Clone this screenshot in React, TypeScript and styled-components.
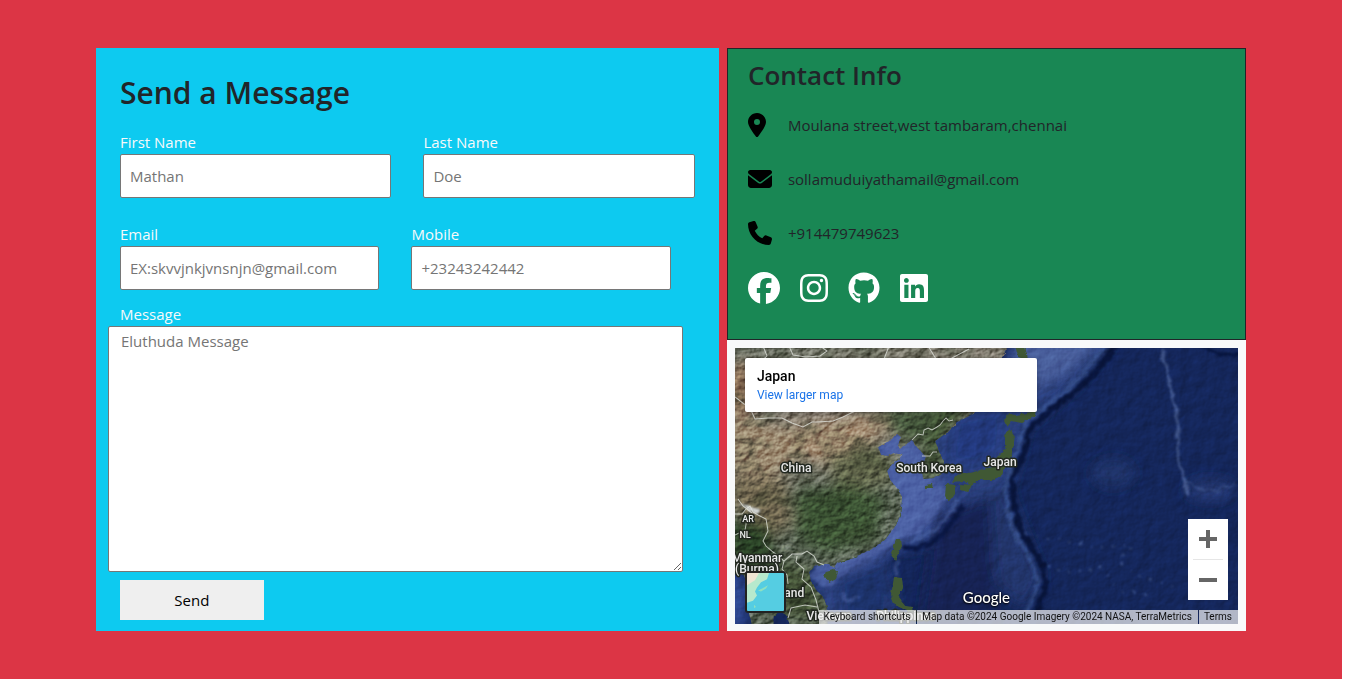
import React from "react";
import styled, { createGlobalStyle } from "styled-components";
import {
  FaEnvelope,
  FaFacebook,
  FaGithub,
  FaInstagram,
  FaLinkedin,
  FaLocationDot,
  FaPhone,
} from "react-icons/fa6";

const GlobalStyle = createGlobalStyle`
  *, *::before, *::after { box-sizing: border-box; }
  body {
    margin: 0;
    background: #fff;
    color: #212529;
    font-family: "Segoe UI", "Open Sans", "Noto Sans", sans-serif;
    font-size: 15px;
    line-height: 24px;
  }
`;

const Section = styled.main`
  display: grid;
  grid-template-columns: 6fr 5fr;
  gap: 8px;
  min-height: 100vh;
  margin-right: 24px;
  padding: 48px 96px;
  align-items: start;
  background: #dc3545;
`;

const MessageForm = styled.form`
  padding: 25px 12px 11px;
  background: #0dcaf0;
`;

const Title = styled.h1`
  margin: 0 12px 17px;
  font-size: 30px;
  font-weight: 600;
  line-height: 40px;
`;

const FieldRow = styled.div<{ $inset?: boolean }>`
  display: grid;
  grid-template-columns: 1fr 1fr;
  gap: 32px;
  margin: 0 ${(p) => (p.$inset ? "36px 12px 12px" : "12px 24px 12px")};
`;

const Field = styled.div`
  min-width: 0;
`;

const Label = styled.label<{ $indent?: boolean }>`
  display: block;
  margin-left: ${(p) => (p.$indent ? "12px" : "0")};
  color: #f8f9fa;
`;

const Input = styled.input`
  display: block;
  width: 100%;
  height: 44px;
  padding: 0 9px;
  border: 1px solid #767676;
  border-radius: 2px;
  background: #fff;
  font: inherit;
  &::placeholder { color: #757575; opacity: 1; }
`;

const TextArea = styled.textarea`
  display: block;
  width: 96%;
  height: 246px;
  padding: 2px 12px;
  border: 1px solid #767676;
  border-radius: 2px;
  background: #fff;
  font: inherit;
  &::placeholder { color: #757575; opacity: 1; }
`;

const SendButton = styled.button`
  display: block;
  width: 24%;
  height: 40px;
  margin: 8px 12px 0;
  border: 0;
  background: #efefef;
  color: #000;
  font: inherit;
`;

const Side = styled.div`
  display: flex;
  flex-direction: column;
  align-self: stretch;
  min-width: 0;
`;

const ContactCard = styled.section`
  padding: 10px 20px 35px;
  border: 1px solid #212529;
  background: #198754;
`;

const ContactTitle = styled.h2`
  margin: 0 0 22px;
  font-size: 26px;
  font-weight: 600;
  line-height: 32px;
`;

const ContactList = styled.address`
  display: grid;
  gap: 30px;
  font-style: normal;
`;

const ContactItem = styled.div<{ $icon: number }>`
  display: grid;
  grid-template-columns: 24px 1fr;
  gap: 16px;
  align-items: center;
  height: 24px;
  svg { width: ${(p) => p.$icon}px; height: 24px; color: #000; }
`;

const Socials = styled.nav`
  display: flex;
  gap: 20px;
  margin-top: 27px;
`;

const SocialLink = styled.a<{ $icon: number }>`
  display: block;
  height: 32px;
  color: #fff;
  svg { display: block; width: ${(p) => p.$icon}px; height: 32px; }
`;

const MapFrame = styled.section`
  display: flex;
  flex: 1;
  padding: 8px 8px 7px;
  background: #f8f9fa;
`;

const MapView = styled.div`
  position: relative;
  flex: 1;
  min-width: 0;
  min-height: 276px;
  overflow: hidden;
  background: #14275d;
  font-family: Roboto, sans-serif;
`;

const MapDrawing = styled.svg`
  position: absolute;
  inset: 0;
  width: 100%;
  height: 100%;
`;

const PlaceCard = styled.div`
  position: absolute;
  top: 10px;
  left: 10px;
  width: 292px;
  height: 54px;
  padding: 9px 12px;
  border-radius: 2px;
  background: #fff;
  box-shadow: 0 1px 4px rgba(0, 0, 0, 0.3);
`;

const PlaceName = styled.div`
  color: #000;
  font-size: 14px;
  font-weight: 500;
  line-height: 18px;
`;

const PlaceLink = styled.a`
  display: block;
  color: #1a73e8;
  font-size: 12px;
  line-height: 20px;
  text-decoration: none;
`;

const ZoomControls = styled.div`
  position: absolute;
  right: 10px;
  bottom: 24px;
  width: 40px;
  height: 81px;
  padding: 0 5px;
  background: #fff;
`;

const ZoomButton = styled.button`
  display: grid;
  place-items: center;
  width: 30px;
  height: 40px;
  padding: 0;
  border: 0;
  background: none;
  & + & { height: 41px; border-top: 1px solid #e6e6e6; }
`;

const LayerButton = styled.button`
  position: absolute;
  bottom: 11px;
  left: 10px;
  width: 41px;
  height: 42px;
  padding: 0;
  overflow: hidden;
  border: 2px solid #222;
  border-radius: 3px;
  background: #55cde2;
  svg { display: block; width: 100%; height: 100%; }
`;

const Brand = styled.div`
  position: absolute;
  bottom: 17px;
  left: 50%;
  transform: translateX(-50%);
  color: #fff;
  font-family: Lato, sans-serif;
  font-size: 15px;
  font-weight: 500;
  line-height: 20px;
  text-shadow: 0 0 2px #000, 0 1px 2px #000;
`;

const Attribution = styled.div`
  position: absolute;
  right: 0;
  bottom: 0;
  display: flex;
  gap: 1px;
  height: 14px;
  font-size: 10px;
  line-height: 14px;
  white-space: nowrap;
`;

const Credit = styled.span`
  padding: 0 6px 0 5px;
  background: rgba(245, 245, 245, 0.7);
  color: #111;
`;

const CreditLink = styled(Credit).attrs({ as: "a", href: "#" })`
  text-decoration: none;
`;

const MAINLAND =
  "M-5 -5H275L270 4L262 18L254 38L248 56L238 66L222 74L213 84L200 93L204 104L209 114L207 125L198 130L188 131L187 118L191 109L182 99L177 92L168 98L165 101L163 97L166 89L161 85L154 93L143 99L146 107L153 108L159 105L168 107L162 112L157 116L152 123L155 132L162 140L167 149L166 159L165 168L159 180L152 189L143 197L135 202L126 206L119 210L102 215L99 220L94 216L88 216L79 218L74 224L76 234L82 243L88 249L92 259L93 270L90 281H56L52 268L44 262L39 268L38 281H18L13 261L14 240L8 225L-5 218Z";

const ISLANDS = [
  "M91 223L98 221L103 224L101 231L94 235L89 229Z",
  "M161 192L166 191L167 198L163 206L160 212L156 205Z",
  "M159 229L167 230L168 240L164 249L171 258L177 259L178 265L168 261L160 257L156 247Z",
  "M273 66L281 67L301 63L299 69L286 75L277 73L272 79L269 73Z",
  "M280 -3H289L292 12L283 9Z",
  "M274 80L280 88L278 100L275 112L270 120L267 128L256 132L242 132L236 139L229 133L216 134L221 127L239 124L247 121L258 119L262 109L270 101L270 89Z",
  "M211 136L220 137L220 145L214 153L210 148Z",
  "M225 137L237 138L232 144L225 142Z",
  "M190 137L196 136L197 140L190 141Z",
];

const BORDERS = [
  "M0 49L9 56L14 58L20 71L33 70L47 70L57 75L68 79L77 74L82 74L98 73L108 69L118 64L139 52L175 45L205 38L220 28L223 18L217 10L234 1",
  "M28 -2L32 8L23 17M54 -2L58 7L71 9L85 8L92 3L85 -2M154 -2L149 11M193 -2L201 11",
  "M177 92L183 86L188 87L189 82L193 80L197 82L202 79L205 77L208 73L211 70L214 73L218 72",
  "M187 108L195 108L198 104L202 104",
  "M0 166L7 166L11 161L15 158L18 164L23 167L31 171L33 183L28 193L31 198L38 204L43 208L49 213L47 221L52 227L53 236",
  "M49 213L57 206L67 206L72 203L79 208L82 214L89 217M62 208L61 214L69 221L67 231L76 239L81 252L84 264",
  "M53 270L56 260L70 257L82 259M0 187L10 182L12 171M3 151L8 158L17 165",
];

const LABELS = [
  { x: 61, y: 124, text: "China" },
  { x: 194, y: 124, text: "South Korea" },
  { x: 265, y: 118, text: "Japan" },
  { x: 22, y: 214, text: "Myanmar" },
  { x: 22, y: 225, text: "(Burma)" },
  { x: 46, y: 249, text: "Thailand" },
  { x: 94, y: 272, text: "Vietnam" },
  { x: 171, y: 272, text: "Philippines" },
];

function SatelliteMap() {
  return (
    <MapDrawing viewBox="0 0 503 276" preserveAspectRatio="xMidYMid slice" role="img" aria-label="Satellite map of East Asia">
      <defs>
        <linearGradient id="terrain" x1="0" y1="0" x2="0.25" y2="1">
          <stop offset="0" stopColor="#4b5840" />
          <stop offset="0.14" stopColor="#69694f" />
          <stop offset="0.3" stopColor="#94826b" />
          <stop offset="0.44" stopColor="#7b725a" />
          <stop offset="0.58" stopColor="#4b5c41" />
          <stop offset="1" stopColor="#3a4f34" />
        </linearGradient>
        <filter id="haze" x="-20%" y="-20%" width="140%" height="140%">
          <feGaussianBlur stdDeviation="7" />
        </filter>
        <filter id="ridge" x="-20%" y="-20%" width="140%" height="140%" colorInterpolationFilters="sRGB">
          <feTurbulence type="fractalNoise" baseFrequency="0.12" numOctaves="3" seed="4" />
          <feDisplacementMap in="SourceGraphic" scale="7" xChannelSelector="R" yChannelSelector="G" />
          <feGaussianBlur stdDeviation="1" />
        </filter>
        <filter id="coast" colorInterpolationFilters="sRGB">
          <feTurbulence type="fractalNoise" baseFrequency="0.2" numOctaves="2" seed="9" />
          <feDisplacementMap in="SourceGraphic" scale="4" xChannelSelector="R" yChannelSelector="G" />
        </filter>
        <filter id="relief" x="0" y="0" width="100%" height="100%" colorInterpolationFilters="sRGB">
          <feTurbulence type="fractalNoise" baseFrequency="0.12 0.15" numOctaves="5" seed="12" />
          <feDiffuseLighting surfaceScale="2" lightingColor="#fff">
            <feDistantLight azimuth="225" elevation="30" />
          </feDiffuseLighting>
        </filter>
        <filter id="patches" x="0" y="0" width="100%" height="100%" colorInterpolationFilters="sRGB">
          <feTurbulence type="fractalNoise" baseFrequency="0.035 0.05" numOctaves="4" seed="31" />
          <feColorMatrix values="0 0 0 0 0.15  0 0 0 0 0.2  0 0 0 0 0.12  3.4 0 0 0 -1.5" />
        </filter>
        <filter id="seabed" x="0" y="0" width="100%" height="100%" colorInterpolationFilters="sRGB">
          <feTurbulence type="fractalNoise" baseFrequency="0.08" numOctaves="5" seed="21" />
          <feDiffuseLighting surfaceScale="1" lightingColor="#fff">
            <feDistantLight azimuth="225" elevation="30" />
          </feDiffuseLighting>
        </filter>
        <clipPath id="land">
          <path d={MAINLAND} />
        </clipPath>
      </defs>

      <rect width="503" height="276" fill="#14265a" />
      <g filter="url(#haze)">
        <path d="M205 60L300 -10H380L340 38L292 78L284 105L275 138L250 150L220 160L190 197L150 205L165 276H80V200L150 170V80Z" fill="#2a417e" />
        <path d="M135 75L180 92L207 135L210 150L188 180L160 195L110 225L88 235L75 222L150 182Z" fill="#485da1" />
        <path d="M280 -10H370L330 25L292 42L270 38Z" fill="#495f9c" />
        <path d="M222 72L268 62L265 98L240 118L214 112Z" fill="#21397c" />
        <path d="M235 150L272 138L290 185L308 230L290 262L262 240L255 190Z" fill="#20366c" />
        <path d="M100 225L150 215L155 276H110Z" fill="#1d306a" />
        <path d="M200 165L255 150L262 276H185Z" fill="#142352" />
        <ellipse cx="475" cy="142" rx="24" ry="10" fill="#2c4580" opacity="0.7" />
        <ellipse cx="378" cy="125" rx="22" ry="14" fill="#2a407a" opacity="0.5" />
        <ellipse cx="-2" cy="255" rx="14" ry="32" fill="#334b97" />
      </g>
      <path d="M143 99L154 93L163 86L177 92L188 108L188 131L196 140L210 137L212 148L196 172L184 186L166 190L152 200L120 216L98 236L86 240L74 226L88 210L150 180L165 150L152 130L165 110Z" fill="#4f64a8" opacity="0.65" filter="url(#ridge)" />
      <g fill="none" filter="url(#ridge)">
        <path d="M382 -3L358 27L342 42L315 62L295 80L290 103L277 132L278 148L285 182L305 212L312 235L302 262" stroke="#08143a" strokeWidth="6" />
        <path d="M370 -3L348 26L336 38L290 74L281 104L269 140L277 181L295 210L303 235L291 264" stroke="#4866a3" strokeWidth="4" opacity="0.45" />
        <path d="M228 157L208 187L182 201L168 198" stroke="#0a1743" strokeWidth="5" />
        <path d="M222 153L202 181L176 194" stroke="#526cae" strokeWidth="4" opacity="0.5" />
        <path d="M427 0L430 16L435 35L438 54L442 69L443 92L445 119L450 136L452 148" stroke="#6078ae" strokeWidth="3" opacity="0.6" />
        <path d="M461 -4L480 5L505 7" stroke="#07153f" strokeWidth="4" />
        <path d="M450 132L462 140L482 143L500 134" stroke="#4c659d" strokeWidth="2" opacity="0.5" />
        <path d="M281 182L300 189L328 191L359 200L397 197L384 215L405 229L440 239" stroke="#526ba2" strokeWidth="2" strokeDasharray="2 9" opacity="0.7" />
        <path d="M311 218L339 225L366 219L383 241L412 246" stroke="#526ba2" strokeWidth="2" strokeDasharray="3 8" opacity="0.6" />
        <path d="M163 212L161 228M105 245L114 254L124 248" stroke="#4d66a7" strokeWidth="4" opacity="0.5" />
      </g>
      <rect width="503" height="276" filter="url(#seabed)" opacity="0.4" style={{ mixBlendMode: "overlay" }} />

      <g filter="url(#coast)">
        <path d={MAINLAND} fill="url(#terrain)" />
        {ISLANDS.map((d) => (
          <path key={d} d={d} fill="#405834" />
        ))}
      </g>
      <g clipPath="url(#land)">
        <g filter="url(#haze)">
          <path d="M45 82L130 67L165 75L140 88L95 117L58 107Z" fill="#a68e73" />
          <path d="M-8 65L55 82L60 110L28 135L-8 118Z" fill="#9b8970" />
          <path d="M-8 18L15 14V70L-8 62Z" fill="#8d7057" />
          <path d="M-5 125L50 130L58 175L38 190L-5 158Z" fill="#70664f" />
          <path d="M145 60L250 50L215 78L182 97L153 82Z" fill="#4a5c40" />
          <path d="M200 60L250 50L215 80L200 130L185 130L190 98Z" fill="#3c4f30" />
          <path d="M90 105L150 95L160 135L102 145Z" fill="#5f634a" />
          <path d="M60 145L115 137L150 150L140 190L92 205L62 190Z" fill="#3d5435" />
          <path d="M-5 170L35 176L40 220L12 226L-5 215Z" fill="#294225" />
          <path d="M40 212L80 222L90 270H40Z" fill="#445238" />
        </g>
        <rect width="503" height="276" filter="url(#patches)" opacity="0.35" />
        <rect width="503" height="276" filter="url(#relief)" opacity="0.5" style={{ mixBlendMode: "overlay" }} />
        <path d="M5 155L12 157L18 160L25 161L22 166L13 163Z" fill="#d0d4d4" filter="url(#ridge)" />
      </g>
      <g fill="none" stroke="#e5e8e2" strokeWidth="1" opacity="0.75">
        {BORDERS.map((d) => (
          <path key={d} d={d} />
        ))}
      </g>
      <g
        fill="#e8e8e8"
        stroke="#222820"
        strokeWidth="3"
        strokeLinejoin="round"
        paintOrder="stroke"
        textAnchor="middle"
        fontFamily="Roboto, sans-serif"
        fontSize="12"
        fontWeight="500"
      >
        {LABELS.map((l) => (
          <text key={l.text} x={l.x} y={l.y}>{l.text}</text>
        ))}
        <text x="13" y="174" fontSize="9">AR</text>
        <text x="10" y="190" fontSize="9">NL</text>
      </g>
    </MapDrawing>
  );
}

const CONTACTS = [
  { icon: <FaLocationDot />, width: 18, text: "Moulana street,west tambaram,chennai" },
  { icon: <FaEnvelope />, width: 24, text: "sollamuduiyathamail@gmail.com" },
  { icon: <FaPhone />, width: 24, text: "+914479749623" },
];

const SOCIALS = [
  { icon: <FaFacebook />, width: 32, name: "Facebook" },
  { icon: <FaInstagram />, width: 28, name: "Instagram" },
  { icon: <FaGithub />, width: 32, name: "GitHub" },
  { icon: <FaLinkedin />, width: 28, name: "LinkedIn" },
];

function TextField(props: { id: string; label: string; placeholder: string; type?: string }) {
  return (
    <Field>
      <Label htmlFor={props.id}>{props.label}</Label>
      <Input id={props.id} type={props.type ?? "text"} placeholder={props.placeholder} />
    </Field>
  );
}

export default function App() {
  return (
    <>
      <GlobalStyle />
      <Section>
        <MessageForm onSubmit={(e) => e.preventDefault()}>
          <Title>Send a Message</Title>
          <FieldRow>
            <TextField id="first" label="First Name" placeholder="Mathan" />
            <TextField id="last" label="Last Name" placeholder="Doe" />
          </FieldRow>
          <FieldRow $inset>
            <TextField id="email" label="Email" type="email" placeholder="EX:skvvjnkjvnsnjn@gmail.com" />
            <TextField id="mobile" label="Mobile" type="tel" placeholder="+23243242442" />
          </FieldRow>
          <Label htmlFor="message" $indent>Message</Label>
          <TextArea id="message" placeholder="Eluthuda Message" />
          <SendButton type="submit">Send</SendButton>
        </MessageForm>

        <Side>
          <ContactCard>
            <ContactTitle>Contact Info</ContactTitle>
            <ContactList>
              {CONTACTS.map((c) => (
                <ContactItem key={c.text} $icon={c.width}>
                  {c.icon}
                  <span>{c.text}</span>
                </ContactItem>
              ))}
            </ContactList>
            <Socials>
              {SOCIALS.map((s) => (
                <SocialLink key={s.name} $icon={s.width} href="#" aria-label={s.name}>{s.icon}</SocialLink>
              ))}
            </Socials>
          </ContactCard>

          <MapFrame>
            <MapView>
              <SatelliteMap />
              <PlaceCard>
                <PlaceName>Japan</PlaceName>
                <PlaceLink href="#">View larger map</PlaceLink>
              </PlaceCard>
              <LayerButton type="button" aria-label="Show street map">
                <svg viewBox="0 0 37 37" preserveAspectRatio="none">
                  <path d="M0 0H22L20 6L14 9L10 14L8 18L10 22L6 27L0 29Z" fill="#b7e9cd" />
                  <path d="M0 0H12L8 7L0 12Z" fill="#eee5d4" />
                  <path d="M21 12L19 15L14 18L11 17L17 14ZM7 31L9 33L7 34Z" fill="#8ee0c0" />
                </svg>
              </LayerButton>
              <Brand>Google</Brand>
              <ZoomControls>
                <ZoomButton type="button" aria-label="Zoom in">
                  <svg width="18" height="18" viewBox="0 0 18 18"><path d="M7 0h4v7h7v4h-7v7H7v-7H0V7h7z" fill="#666" /></svg>
                </ZoomButton>
                <ZoomButton type="button" aria-label="Zoom out">
                  <svg width="18" height="18" viewBox="0 0 18 18"><path d="M0 7h18v4H0z" fill="#666" /></svg>
                </ZoomButton>
              </ZoomControls>
              <Attribution>
                <Credit>Keyboard shortcuts</Credit>
                <Credit>Map data ©2024 Google Imagery ©2024 NASA, TerraMetrics</Credit>
                <CreditLink>Terms</CreditLink>
              </Attribution>
            </MapView>
          </MapFrame>
        </Side>
      </Section>
    </>
  );
}
